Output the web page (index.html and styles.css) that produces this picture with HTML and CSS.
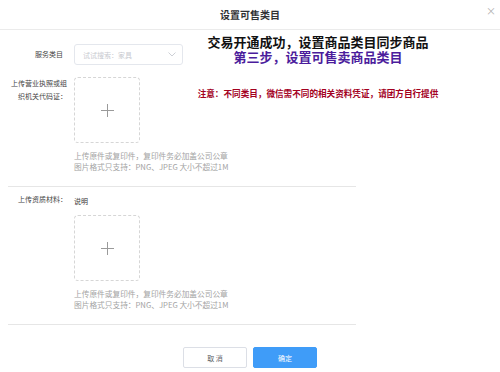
FILE: index.html
```html
<!DOCTYPE html>
<html lang="zh-CN">
<head>
    <meta charset="UTF-8">
    <meta name="viewport" content="width=device-width, initial-scale=1.0">
    <title>设置可售类目</title>
    <link rel="stylesheet" href="styles.css">
</head>
<body>
    <div class="dialog">
        <div class="dialog-header">
            <span class="dialog-title">设置可售类目</span>
            <span class="dialog-close">×</span>
        </div>

        <div class="dialog-body">
            <div class="form-row row-select">
                <label class="form-label label-short">服务类目</label>
                <div class="form-content">
                    <div class="select-box">
                        <span class="placeholder">试试搜索：家具</span>
                        <svg class="chevron" width="8" height="5" viewBox="0 0 8 5">
                            <path d="M0.5 0.5 L4 4 L7.5 0.5" fill="none" stroke="#c0c4cc" stroke-width="0.8"/>
                        </svg>
                    </div>
                </div>
            </div>

            <div class="form-row row-upload">
                <label class="form-label">上传营业执照或组织机关代码证：</label>
                <div class="form-content">
                    <div class="upload-box"><span class="plus"></span></div>
                    <div class="hint">
                        上传原件或复印件，复印件务必加盖公司公章<br>
                        图片格式只支持：PNG、JPEG 大小不超过1M
                    </div>
                </div>
            </div>

            <div class="form-row row-upload row-second">
                <label class="form-label">上传资质材料：</label>
                <div class="form-content">
                    <div class="note">说明</div>
                    <div class="upload-box"><span class="plus"></span></div>
                    <div class="hint">
                        上传原件或复印件，复印件务必加盖公司公章<br>
                        图片格式只支持：PNG、JPEG 大小不超过1M
                    </div>
                </div>
            </div>
        </div>

        <div class="dialog-footer">
            <button class="btn btn-cancel">取 消</button>
            <button class="btn btn-primary">确定</button>
        </div>

        <!-- 标注说明 -->
        <div class="annotation">
            <div class="ann-main">交易开通成功，设置商品类目同步商品</div>
            <div class="ann-step">第三步，设置可售卖商品类目</div>
            <div class="ann-warn">注意：不同类目，微信需不同的相关资料凭证，请团方自行提供</div>
        </div>
    </div>
</body>
</html>
```

FILE: styles.css
```css
:root {
    --text-color: #333;
    --hint-color: #a3a3a3;
    --border-color: #e4e7ed;
    --primary-color: #3f9cf8;
}

body {
    margin: 0;
    font-family: "Noto Sans CJK SC", "Noto Sans", sans-serif;
    color: var(--text-color);
    background-color: #fff;
}

.dialog {
    position: relative;
    width: 500px;
    height: 372px;
    overflow: hidden;
}

.dialog-header {
    position: relative;
    height: 29px;
    border-bottom: 1px solid #ebebeb;
    text-align: center;
}

.dialog-title {
    display: inline-block;
    margin-top: 4px;
    line-height: 16px;
    font-size: 10px;
    font-weight: 700;
    color: #303133;
}

.dialog-close {
    position: absolute;
    right: 4px;
    top: 3px;
    font-size: 10px;
    line-height: 16px;
    color: #b0b0b0;
}

.dialog-body {
    margin-left: 8px;
    width: 348px;
}

.form-row {
    display: flex;
    gap: 7px;
}

.form-label {
    width: 57px;
    margin-left: 2px;
    flex-shrink: 0;
    text-align: right;
    font-size: 7px;
    line-height: 12.5px;
    color: #444;
}

.label-short {
    width: 53px;
    padding-right: 4px;
}

.form-content {
    flex: 1;
}

.row-select {
    margin-top: 14px;
    align-items: center;
}

.select-box {
    width: 93px;
    height: 19px;
    border: 1px solid var(--border-color);
    border-radius: 3px;
    display: flex;
    align-items: center;
    justify-content: space-between;
    padding: 0 6px 0 8px;
}

.placeholder {
    font-size: 7px;
    color: #c8cad0;
}

.row-upload {
    margin-top: 12px;
    padding-bottom: 14px;
    border-bottom: 1px solid #e6e6e6;
}

.row-second {
    margin-top: 0;
    padding-top: 6px;
}

.upload-box {
    width: 64px;
    height: 64px;
    border: 1px dashed #d6d6d6;
    border-radius: 4px;
    display: flex;
    align-items: center;
    justify-content: center;
}

.plus {
    position: relative;
    width: 13px;
    height: 13px;
}
.plus::before,
.plus::after {
    content: "";
    position: absolute;
    background-color: #9a9a9a;
}
.plus::before {
    left: 0;
    top: 6px;
    width: 13px;
    height: 1px;
}
.plus::after {
    left: 6px;
    top: 0;
    width: 1px;
    height: 13px;
}

.hint {
    margin-top: 7px;
    font-size: 7.7px;
    line-height: 11px;
    color: var(--hint-color);
    white-space: nowrap;
}

.note {
    margin-top: 2px;
    margin-bottom: 8px;
    font-size: 7px;
    line-height: 12px;
    color: #333;
}

.dialog-footer {
    display: flex;
    justify-content: center;
    gap: 6px;
    margin-top: 22px;
}

.btn {
    width: 64px;
    height: 21px;
    border-radius: 2px;
    font-family: "Noto Sans CJK SC", sans-serif;
    font-size: 7px;
    padding: 0;
    cursor: pointer;
}

.btn-cancel {
    background-color: #fff;
    border: 1px solid #dcdfe6;
    color: #606266;
}

.btn-primary {
    background-color: var(--primary-color);
    border: 1px solid var(--primary-color);
    color: #fff;
}

/* 标注 */
.annotation {
    position: absolute;
    left: 190px;
    top: 35px;
    width: 256px;
    text-align: center;
    font-family: "Liberation Sans", "Noto Sans CJK SC", sans-serif;
    font-weight: 700;
}

.ann-main {
    font-size: 13px;
    line-height: 15px;
    color: #111;
}

.ann-step {
    font-size: 13px;
    line-height: 15px;
    color: #4b1c9c;
}

.ann-warn {
    margin-top: 23px;
    font-size: 8.6px;
    line-height: 12px;
    color: #a3001e;
    white-space: nowrap;
}
```
